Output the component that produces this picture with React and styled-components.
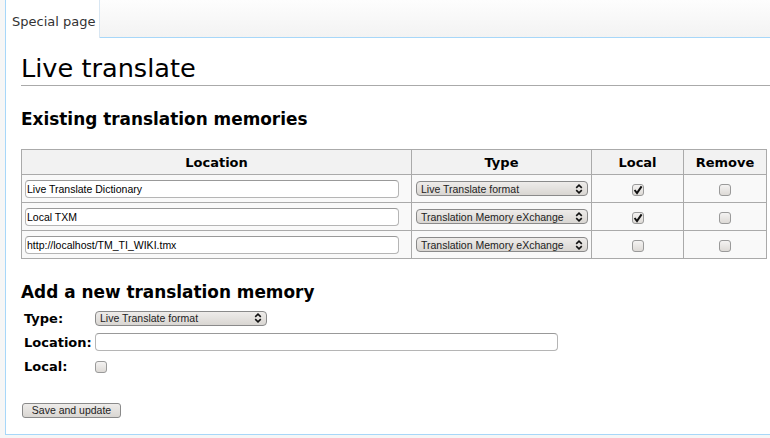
import React from "react";
import styled, { createGlobalStyle } from "styled-components";

const Global = createGlobalStyle`
  html, body { margin: 0; padding: 0; }
  body {
    background: #f6f6f6;
    font-family: "DejaVu Sans", sans-serif;
    color: #000;
    width: 770px;
    height: 438px;
    overflow: hidden;
  }
`;

const Page = styled.div`
  display: flex;
  flex-direction: column;
  width: 770px;
`;

const TabBar = styled.div`
  display: flex;
  height: 38px;
  padding-left: 5px;
`;

const Tab = styled.div`
  width: 95px;
  height: 38px;
  box-sizing: border-box;
  border-left: 1px solid #a7d7f9;
  border-right: 1px solid #d8e6f2;
  background: #fff;
  font-size: 13px;
  color: #333;
  padding: 14px 0 0 6px;
  white-space: nowrap;
`;

const TabFill = styled.div`
  flex: 1;
  height: 38px;
  box-sizing: border-box;
  background: linear-gradient(#fdfdfd, #f3f3f3);
  border-bottom: 1px solid #a7d7f9;
`;

const Content = styled.div`
  margin-left: 5px;
  background: #fff;
  border-left: 1px solid #a7d7f9;
  border-bottom: 1px solid #a7d7f9;
  padding: 0 0 0 15px;
  height: 397px;
  box-sizing: border-box;
`;

const Title = styled.h1`
  margin: 0;
  padding-top: 14px;
  font-size: 25.6px;
  font-weight: normal;
  line-height: 32px;
  border-bottom: 1px solid #aaa;
  padding-bottom: 1px;
`;

const Heading = styled.h2`
  margin: ${(p) => p.$top}px 0 0 0;
  font-size: 16.9px;
  font-weight: bold;
  line-height: 22px;
`;

const Table = styled.table`
  border-collapse: collapse;
  table-layout: fixed;
  width: 745px;
  margin-top: 19px;
  background: #f9f9f9;
  border: 1px solid #aaa;
`;

const Col = styled.col`
  width: ${(p) => p.$w}px;
`;

const Th = styled.th`
  background: #f2f2f2;
  border: 1px solid #aaa;
  font-size: 13px;
  font-weight: bold;
  height: 24px;
  padding: 0;
  text-align: center;
`;

const Td = styled.td`
  border: 1px solid #aaa;
  height: 27px;
  padding: 0 0 0 ${(p) => (p.$center ? 0 : 3)}px;
  text-align: ${(p) => (p.$center ? "center" : "left")};
  vertical-align: middle;
`;

const TextInput = styled.input`
  display: block;
  box-sizing: border-box;
  width: ${(p) => p.$w}px;
  height: ${(p) => p.$h || 18}px;
  border: 1px solid #b5b5b5;
  border-top-color: #999;
  border-radius: 4px;
  background: #fff;
  font-family: "Liberation Sans", sans-serif;
  font-size: 10.5px;
  padding: 0 0 0 1px;
  color: #000;
  outline: none;
`;

const Select = styled.div`
  display: flex;
  align-items: center;
  justify-content: space-between;
  box-sizing: border-box;
  width: ${(p) => p.$w}px;
  height: 15px;
  margin-left: ${(p) => p.$ml || 0}px;
  border: 1px solid #8a8a8a;
  border-radius: 4px;
  background: linear-gradient(#eeecea, #d9d6d2);
  font-family: "Liberation Sans", sans-serif;
  font-size: 10.5px;
  color: #222;
  padding: 0 4px 0 4px;
  white-space: nowrap;
  text-align: left;
`;

const Check = styled.span`
  display: inline-flex;
  align-items: center;
  justify-content: center;
  box-sizing: border-box;
  width: 12px;
  height: 12px;
  border: 1px solid #9a9a9a;
  border-radius: 3px;
  background: linear-gradient(#f4f3f2, #dddad6);
  vertical-align: middle;
`;

const Arrows = () => (
  <svg width="8" height="10" viewBox="0 0 8 10">
    <path d="M1.2 3.8 L4 1.2 L6.8 3.8 M1.2 6.2 L4 8.8 L6.8 6.2" fill="none" stroke="#111" strokeWidth="1.6" />
  </svg>
);

const Tick = () => (
  <svg width="10" height="10" viewBox="0 0 10 10">
    <path d="M1.6 5 L4 8 L8.6 1.4" fill="none" stroke="#111" strokeWidth="2" />
  </svg>
);

const Box = ({ checked }) => <Check>{checked ? <Tick /> : null}</Check>;

const Form = styled.div`
  display: grid;
  grid-template-columns: 71px auto;
  grid-auto-rows: 24px;
  align-items: center;
  margin-top: 3px;
  padding-left: 3px;
`;

const Label = styled.span`
  font-size: 13px;
  font-weight: bold;
`;

const Button = styled.button`
  display: block;
  margin: 25px 0 0 1px;
  width: 99px;
  height: 15px;
  box-sizing: border-box;
  border: 1px solid #8a8a8a;
  border-radius: 3px;
  background: linear-gradient(#eeecea, #d9d6d2);
  font-family: "Liberation Sans", sans-serif;
  font-size: 10.5px;
  color: #222;
  padding: 0;
  line-height: 13px;
`;

const rows = [
  { loc: "Live Translate Dictionary", type: "Live Translate format", local: true },
  { loc: "Local TXM", type: "Translation Memory eXchange", local: true },
  { loc: "http://localhost/TM_TI_WIKI.tmx", type: "Translation Memory eXchange", local: false },
];

export default function App() {
  return (
    <Page>
      <Global />
      <TabBar>
        <Tab>Special page</Tab>
        <TabFill />
      </TabBar>
      <Content>
        <Title>Live translate</Title>
        <Heading $top={22}>Existing translation memories</Heading>
        <Table>
          <colgroup>
            <Col $w={390} />
            <Col $w={180} />
            <Col $w={92} />
            <Col $w={83} />
          </colgroup>
          <thead>
            <tr>
              <Th>Location</Th>
              <Th>Type</Th>
              <Th>Local</Th>
              <Th>Remove</Th>
            </tr>
          </thead>
          <tbody>
            {rows.map((r) => (
              <tr key={r.loc}>
                <Td>
                  <TextInput $w={374} defaultValue={r.loc} />
                </Td>
                <Td>
                  <Select $w={172} $ml={1}>
                    <span>{r.type}</span>
                    <Arrows />
                  </Select>
                </Td>
                <Td $center>
                  <Box checked={r.local} />
                </Td>
                <Td $center>
                  <Box />
                </Td>
              </tr>
            ))}
          </tbody>
        </Table>
        <Heading $top={22}>Add a new translation memory</Heading>
        <Form>
          <Label>Type:</Label>
          <Select $w={172}>
            <span>Live Translate format</span>
            <Arrows />
          </Select>
          <Label>Location:</Label>
          <TextInput $w={463} />
          <Label>Local:</Label>
          <span>
            <Box />
          </span>
        </Form>
        <Button>Save and update</Button>
      </Content>
    </Page>
  );
}
